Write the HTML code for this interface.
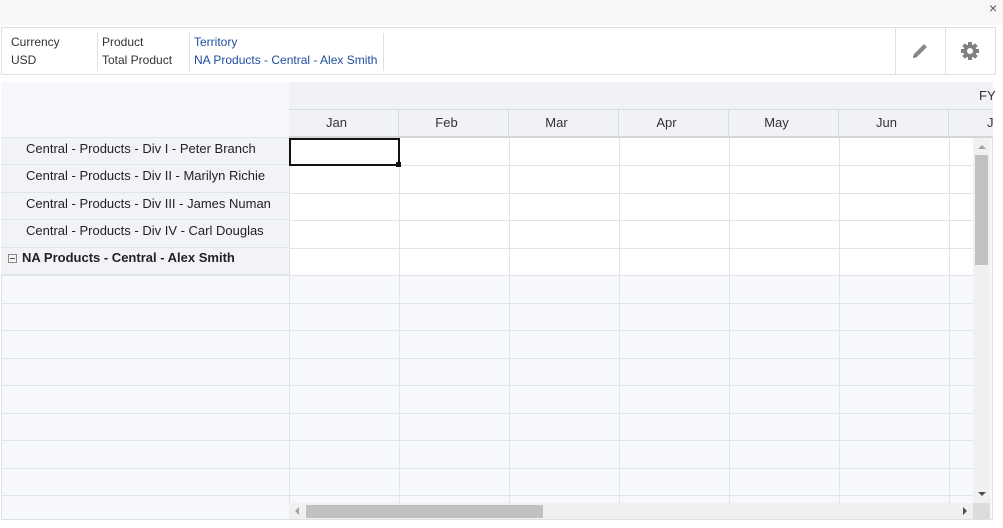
<!DOCTYPE html>
<html><head><style>
*{margin:0;padding:0;box-sizing:border-box}
body{width:1003px;height:528px;background:#fff;font-family:"Liberation Sans",Arial,sans-serif;position:relative;overflow:hidden;font-size:12px;color:#333}
.a{position:absolute}
.pov{left:1px;top:27px;width:995px;height:48px;border:1px solid #dde1e6;background:#fff}
.pc{top:5px;height:38px;border-right:1px solid #dde1e6;line-height:18px;padding-left:4px;font-size:12px}
.hl{background:#f1f2f5;border-bottom:1px solid #d6dbe0}
.mh{top:110px;height:28px;border-right:1px solid #d6dbe0;border-bottom:2px solid #d3d7dc;background:#f1f2f5;text-align:center;line-height:26px;font-size:13px;padding-right:14px}
.rh{left:1px;width:288px;background:#f1f3f7;border-bottom:1px solid #dfe4ea;font-size:13px;color:#222;padding-left:25px;line-height:22px}
</style></head><body>
<div class="a" style="left:0;top:0;width:1003px;height:25px;background:#f7f7f7"></div>
<div class="a" style="left:989px;top:0;font-size:14px;color:#555;line-height:16px">×</div>
<div class="a pov">
 <div class="a pc" style="left:0;width:96px;padding-left:9px">Currency<br>USD</div>
 <div class="a pc" style="left:96px;width:92px">Product<br>Total Product</div>
 <div class="a pc" style="left:188px;width:194px;color:#1f4e9b">Territory<br>NA Products - Central - Alex Smith</div>
 <div class="a" style="left:893px;top:0;width:1px;height:46px;background:#dde1e6"></div>
 <div class="a" style="left:943px;top:0;width:1px;height:46px;background:#dde1e6"></div>
 <svg class="a" style="left:908px;top:13px" width="20" height="20" viewBox="0 0 20 20"><path d="M3 17l1-4L14 3l3 3L7 16z" fill="#8a8a8a"/><path d="M3 17l1-3 2 2z" fill="#6a6a6a"/></svg>
 <svg class="a" style="left:958px;top:13px" width="20" height="20" viewBox="0 0 20 20"><g fill="#808080"><circle cx="10" cy="10" r="6.5"/><rect x="8" y="1" width="4" height="18"/><rect x="1" y="8" width="18" height="4"/><rect x="8" y="1" width="4" height="18" transform="rotate(45 10 10)"/><rect x="8" y="1" width="4" height="18" transform="rotate(-45 10 10)"/></g><circle cx="10" cy="10" r="3" fill="#fff"/></svg>
</div>
<div class="a" style="left:1px;top:82px;width:992px;height:438px;border:1px solid #dde1e6;background:#f7f8fc"></div>
<div class="a" style="left:1px;top:82px;width:288px;height:56px;background:#f7f8fc;border-bottom:1px solid #dfe4ea"></div>
<div class="a hl" style="left:289px;top:82px;width:704px;height:28px"></div>
<div class="a" style="left:979px;top:88px;font-size:13px">FY</div>
<div class="a mh" style="left:289px;width:110px">Jan</div>
<div class="a mh" style="left:399px;width:110px">Feb</div>
<div class="a mh" style="left:509px;width:110px">Mar</div>
<div class="a mh" style="left:619px;width:110px">Apr</div>
<div class="a mh" style="left:729px;width:110px">May</div>
<div class="a mh" style="left:839px;width:110px">Jun</div>
<div class="a mh" style="left:949px;width:44px;text-align:left;padding-left:38px;padding-right:0;overflow:hidden;border-right:none">J</div>
<div class="a" style="left:289px;top:138px;width:684px;height:138px;background:#fff"></div>
<div class="a" style="left:289px;top:138px;width:1px;height:365px;background:#dfe4ea"></div>
<div class="a" style="left:399px;top:138px;width:1px;height:365px;background:#dfe4ea"></div>
<div class="a" style="left:509px;top:138px;width:1px;height:365px;background:#dfe4ea"></div>
<div class="a" style="left:619px;top:138px;width:1px;height:365px;background:#dfe4ea"></div>
<div class="a" style="left:729px;top:138px;width:1px;height:365px;background:#dfe4ea"></div>
<div class="a" style="left:839px;top:138px;width:1px;height:365px;background:#dfe4ea"></div>
<div class="a" style="left:949px;top:138px;width:1px;height:365px;background:#dfe4ea"></div>
<div class="a" style="left:1px;top:165px;width:972px;height:1px;background:#dfe4ea"></div>
<div class="a" style="left:1px;top:193px;width:972px;height:1px;background:#dfe4ea"></div>
<div class="a" style="left:1px;top:220px;width:972px;height:1px;background:#dfe4ea"></div>
<div class="a" style="left:1px;top:248px;width:972px;height:1px;background:#dfe4ea"></div>
<div class="a" style="left:1px;top:275px;width:972px;height:1px;background:#dfe4ea"></div>
<div class="a" style="left:1px;top:303px;width:972px;height:1px;background:#dfe4ea"></div>
<div class="a" style="left:1px;top:330px;width:972px;height:1px;background:#dfe4ea"></div>
<div class="a" style="left:1px;top:358px;width:972px;height:1px;background:#dfe4ea"></div>
<div class="a" style="left:1px;top:385px;width:972px;height:1px;background:#dfe4ea"></div>
<div class="a" style="left:1px;top:413px;width:972px;height:1px;background:#dfe4ea"></div>
<div class="a" style="left:1px;top:440px;width:972px;height:1px;background:#dfe4ea"></div>
<div class="a" style="left:1px;top:468px;width:972px;height:1px;background:#dfe4ea"></div>
<div class="a" style="left:1px;top:495px;width:972px;height:1px;background:#dfe4ea"></div>
<div class="a rh" style="top:138px;height:27px">Central - Products - Div I - Peter Branch</div>
<div class="a rh" style="top:165px;height:28px">Central - Products - Div II - Marilyn Richie</div>
<div class="a rh" style="top:193px;height:27px">Central - Products - Div III - James Numan</div>
<div class="a rh" style="top:220px;height:28px">Central - Products - Div IV - Carl Douglas</div>
<div class="a rh" style="top:248px;height:27px;padding-left:21px;font-weight:bold;line-height:20px">NA Products - Central - Alex Smith</div>
<div class="a" style="left:8px;top:254px;width:9px;height:9px;border:1px solid #888;background:#f4f4f4"></div>
<div class="a" style="left:10px;top:258px;width:5px;height:1px;background:#555"></div>
<div class="a" style="left:289px;top:138px;width:111px;height:28px;border:2px solid #111"></div>
<div class="a" style="left:396px;top:162px;width:5px;height:5px;background:#111"></div>
<div class="a" style="left:973px;top:138px;width:17px;height:365px;background:#f0f0f0"></div>
<div class="a" style="left:975px;top:155px;width:13px;height:110px;background:#c1c1c1"></div>
<div class="a" style="left:978px;top:145px;width:0;height:0;border-left:4px solid transparent;border-right:4px solid transparent;border-bottom:4px solid #a3a3a3"></div>
<div class="a" style="left:978px;top:492px;width:0;height:0;border-left:4px solid transparent;border-right:4px solid transparent;border-top:4px solid #505050"></div>
<div class="a" style="left:289px;top:503px;width:684px;height:16px;background:#f0f0f0"></div>
<div class="a" style="left:973px;top:503px;width:17px;height:16px;background:#dcdcdc"></div>
<div class="a" style="left:306px;top:505px;width:237px;height:13px;background:#c1c1c1"></div>
<div class="a" style="left:295px;top:507px;width:0;height:0;border-top:4px solid transparent;border-bottom:4px solid transparent;border-right:4px solid #a3a3a3"></div>
<div class="a" style="left:963px;top:507px;width:0;height:0;border-top:4px solid transparent;border-bottom:4px solid transparent;border-left:4px solid #505050"></div>
</body></html>
